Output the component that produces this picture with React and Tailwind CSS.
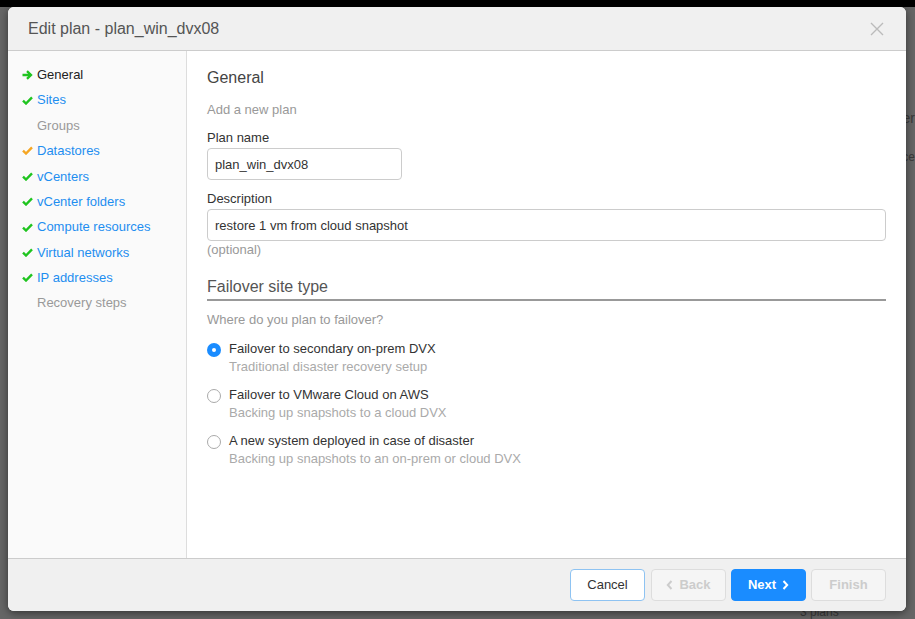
import React, { useState } from 'react';

const steps = [
  { label: 'General', state: 'current' },
  { label: 'Sites', state: 'done' },
  { label: 'Groups', state: 'none' },
  { label: 'Datastores', state: 'warn' },
  { label: 'vCenters', state: 'done' },
  { label: 'vCenter folders', state: 'done' },
  { label: 'Compute resources', state: 'done' },
  { label: 'Virtual networks', state: 'done' },
  { label: 'IP addresses', state: 'done' },
  { label: 'Recovery steps', state: 'none' },
];

const options = [
  { title: 'Failover to secondary on-prem DVX', sub: 'Traditional disaster recovery setup' },
  { title: 'Failover to VMware Cloud on AWS', sub: 'Backing up snapshots to a cloud DVX' },
  { title: 'A new system deployed in case of disaster', sub: 'Backing up snapshots to an on-prem or cloud DVX' },
];

const Check = ({ color }) => (
  <svg width="11" height="9" viewBox="0 0 11 9" className="shrink-0">
    <path d="M1 4.6 L4 7.5 L10 1.3" fill="none" stroke={color} strokeWidth="2.4" strokeLinejoin="miter" />
  </svg>
);

const Arrow = () => (
  <svg width="11" height="10" viewBox="0 0 11 10" className="shrink-0">
    <path d="M0.5 5 H8.5 M5 1.2 L9 5 L5 8.8" fill="none" stroke="#1fc41f" strokeWidth="2.3" />
  </svg>
);

const StepIcon = ({ state }) => {
  if (state === 'current') return <Arrow />;
  if (state === 'done') return <Check color="#1fc41f" />;
  if (state === 'warn') return <Check color="#f5a623" />;
  return <span className="w-[11px] shrink-0" />;
};

const App = () => {
  const [choice, setChoice] = useState(0);
  const [name, setName] = useState('plan_win_dvx08');
  const [desc, setDesc] = useState('restore 1 vm from cloud snapshot');

  return (
    <div className="relative w-[915px] h-[619px] bg-[#666666] overflow-hidden" style={{ fontFamily: '"Liberation Sans", Arial, sans-serif' }}>
      <div className="h-[7px] bg-black" />
      <div className="absolute right-0 top-[108px] text-[14px] text-[#3a3a3a]">er</div>
      <div className="absolute right-0 top-[148px] text-[12px] text-[#3a3a3a]">ce</div>
      <div className="absolute left-[800px] top-[603px] text-[12px] text-[#3a3a3a]">3 plans</div>

      <div className="absolute left-[8px] top-[7px] w-[898px] h-[604px] flex flex-col rounded-[6px] overflow-hidden bg-white shadow-[0_2px_8px_rgba(0,0,0,0.5)]">
        <div className="h-[44px] shrink-0 flex items-center justify-between pl-[20px] pr-[22px] pt-[1px] bg-[#f0f0f0] border-b border-[#cccccc]">
          <span className="text-[16px] text-[#555555]">Edit plan - plan_win_dvx08</span>
          <svg width="14" height="14" viewBox="0 0 14 14">
            <path d="M1 1 L13 13 M13 1 L1 13" stroke="#bbbbbb" strokeWidth="1.4" />
          </svg>
        </div>

        <div className="flex flex-1 min-h-0">
          <div className="w-[179px] shrink-0 bg-[#fafafa] border-r border-[#dddddd] pt-[11px] pl-[14px]">
            {steps.map((s) => (
              <div key={s.label} className="flex items-center gap-[4px] h-[25.4px] text-[13px]">
                <StepIcon state={s.state} />
                <span
                  className={
                    s.state === 'current'
                      ? 'text-[#222222]'
                      : s.state === 'none'
                      ? 'text-[#999999]'
                      : 'text-[#1e8ef0]'
                  }
                >
                  {s.label}
                </span>
              </div>
            ))}
          </div>

          <div className="flex-1 pl-[20px] pr-[20px] pt-[17px]">
            <div className="text-[16px] leading-[20px] text-[#444444]">General</div>
            <div className="mt-[14px] text-[13px] leading-[16px] text-[#999999]">Add a new plan</div>
            <div className="mt-[12px] text-[13px] leading-[16px] text-[#333333]">Plan name</div>
            <input
              value={name}
              onChange={(e) => setName(e.target.value)}
              className="mt-[2px] block w-[195px] h-[32px] px-[7px] rounded-[4px] border border-[#cccccc] text-[13px] text-[#333333] outline-none"
            />
            <div className="mt-[11px] text-[13px] leading-[16px] text-[#333333]">Description</div>
            <input
              value={desc}
              onChange={(e) => setDesc(e.target.value)}
              className="mt-[2px] block w-full h-[32px] px-[7px] rounded-[4px] border border-[#cccccc] text-[13px] text-[#333333] outline-none"
            />
            <div className="mt-[1px] text-[13px] leading-[16px] text-[#999999]">(optional)</div>

            <div className="mt-[19px] pb-[2px] border-b-2 border-[#999999] text-[16px] leading-[20px] text-[#555555]">
              Failover site type
            </div>
            <div className="mt-[11px] text-[13px] leading-[16px] text-[#999999]">Where do you plan to failover?</div>

            <div className="mt-[13px] flex flex-col gap-[12px]">
              {options.map((o, i) => (
                <label key={o.title} className="flex gap-[8px] cursor-pointer" onClick={() => setChoice(i)}>
                  <span
                    className={
                      choice === i
                        ? 'mt-[1.5px] w-[14px] h-[14px] rounded-full bg-[#1a8cff] flex items-center justify-center shrink-0'
                        : 'mt-[1.5px] w-[14px] h-[14px] rounded-full border border-[#aaaaaa] bg-white shrink-0'
                    }
                  >
                    {choice === i && <span className="w-[4px] h-[4px] rounded-full bg-white" />}
                  </span>
                  <span className="flex flex-col gap-[2px]">
                    <span className="text-[13px] leading-[16px] text-[#333333]">{o.title}</span>
                    <span className="text-[13px] leading-[16px] text-[#aaaaaa]">{o.sub}</span>
                  </span>
                </label>
              ))}
            </div>
          </div>
        </div>

        <div className="h-[53px] shrink-0 bg-[#f0f0f0] border-t border-[#cccccc] flex justify-end items-start pt-[10px] pr-[20px] gap-[5px]">
          <button className="w-[75px] h-[32px] mr-[1px] rounded-[4px] bg-white border border-[#8ec3f2] text-[13px] text-[#333333]">
            Cancel
          </button>
          <button disabled className="w-[75px] h-[32px] rounded-[4px] bg-[#f5f5f5] border border-[#dddddd] text-[13px] font-bold text-[#cccccc] flex items-center justify-center gap-[6px]">
            <svg width="7" height="10" viewBox="0 0 7 10">
              <path d="M5.5 1 L1.8 5 L5.5 9" fill="none" stroke="#cccccc" strokeWidth="2" />
            </svg>
            Back
          </button>
          <button className="w-[75px] h-[32px] rounded-[4px] bg-[#1a8cff] border border-[#1a8cff] text-[13px] font-bold text-white flex items-center justify-center gap-[6px]">
            Next
            <svg width="7" height="10" viewBox="0 0 7 10">
              <path d="M1.5 1 L5.2 5 L1.5 9" fill="none" stroke="#ffffff" strokeWidth="2" />
            </svg>
          </button>
          <button disabled className="w-[75px] h-[32px] rounded-[4px] bg-[#f5f5f5] border border-[#dddddd] text-[13px] font-bold text-[#cccccc]">
            Finish
          </button>
        </div>
      </div>
    </div>
  );
};

export default App;
